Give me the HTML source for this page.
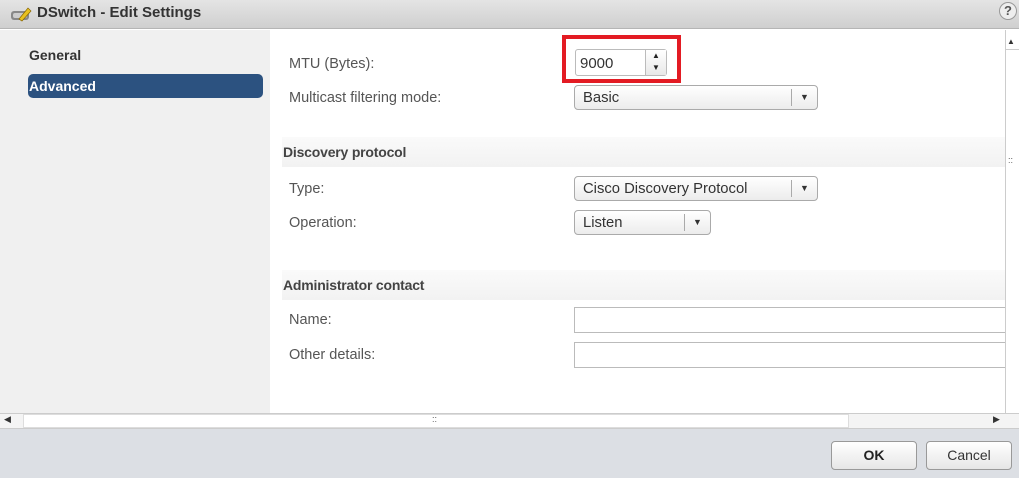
<!DOCTYPE html>
<html><head><style>
*{box-sizing:border-box;margin:0;padding:0}
body{width:1019px;height:478px;overflow:hidden;font-family:"Liberation Sans",sans-serif;background:#fff;position:relative}
.a{position:absolute}
.lbl{font-size:14.5px;color:#555}
.sel{position:absolute;height:25px;border:1px solid #aaa;border-radius:4px;background:linear-gradient(#fff,#ececec);font-size:14.8px;color:#333;padding:4px 8px}
.sel .dd{position:absolute;right:0;top:3px;bottom:3px;width:26px;border-left:1px solid #aaa;font-size:9px;text-align:center;line-height:17px;color:#333}
.band{position:absolute;left:282px;width:723px;height:30px;background:linear-gradient(#fafafa,#f2f2f2);font-size:14px;font-weight:bold;color:#444;padding:7px 1px;letter-spacing:-0.2px}
.inp{position:absolute;height:26px;border:1px solid #bbb;background:#fff}
</style></head><body>
<div class="a" style="left:0;top:0;width:1019px;height:29px;background:linear-gradient(#e4e4e4,#cfcfcf);border-bottom:1px solid #b5b5b5"></div>
<svg class="a" style="left:10px;top:5px" width="22" height="18"><rect x="1" y="6" width="18" height="9" rx="3" fill="#888"/><rect x="3" y="8" width="14" height="5" rx="2" fill="#ccc"/><path d="M9 14 L18 3 L21 6 L12 16 Z" fill="#e8c020" stroke="#886600" stroke-width=".7"/></svg>
<div class="a" style="left:37px;top:4px;font-size:15px;font-weight:bold;color:#333">DSwitch - Edit Settings</div>
<div class="a" style="left:999px;top:2px;width:18px;height:18px;border-radius:50%;border:1px solid #999;background:#eee;font-size:13px;font-weight:bold;text-align:center;line-height:16px;color:#555">?</div>
<div class="a" style="left:0;top:30px;width:270px;height:383px;background:#f0f0f0"></div>
<div class="a" style="left:29px;top:47px;font-size:14px;font-weight:bold;color:#333">General</div>
<div class="a" style="left:28px;top:74px;width:235px;height:24px;background:#2c5280;border-radius:5px;color:#fff;font-size:14px;font-weight:bold;padding:4px 1px">Advanced</div>
<div class="a lbl" style="left:289px;top:56px">MTU (Bytes):</div>
<div class="a" style="left:562px;top:35px;width:119px;height:48px;border:4px solid #e31b23"></div>
<div class="a" style="left:575px;top:49px;width:92px;height:27px;border:1px solid #bbb;border-radius:3px;background:#fff"></div>
<div class="a" style="left:580px;top:55px;font-size:15px;color:#333">9000</div>
<div class="a" style="left:645px;top:50px;width:21px;height:25px;border-left:1px solid #bbb;background:linear-gradient(#fff,#e8e8e8);font-size:8px;text-align:center;line-height:12px;color:#222">▲<br>▼</div>
<div class="a lbl" style="left:289px;top:90px">Multicast filtering mode:</div>
<div class="sel" style="left:574px;top:85px;width:244px">Basic<div class="dd">▼</div></div>
<div class="band" style="top:137px">Discovery protocol</div>
<div class="a lbl" style="left:289px;top:181px">Type:</div>
<div class="sel" style="left:574px;top:176px;width:244px">Cisco Discovery Protocol<div class="dd">▼</div></div>
<div class="a lbl" style="left:289px;top:215px">Operation:</div>
<div class="sel" style="left:574px;top:210px;width:137px">Listen<div class="dd">▼</div></div>
<div class="band" style="top:270px">Administrator contact</div>
<div class="a lbl" style="left:289px;top:312px">Name:</div>
<div class="inp" style="left:574px;top:307px;width:440px"></div>
<div class="a lbl" style="left:289px;top:347px">Other details:</div>
<div class="inp" style="left:574px;top:342px;width:440px"></div>
<div class="a" style="left:1005px;top:30px;width:14px;height:383px;background:#fff;border-left:1px solid #ccc"></div>
<div class="a" style="left:1007px;top:37px;font-size:8px;color:#333">▲</div>
<div class="a" style="left:1005px;top:49px;width:14px;height:1px;background:#ccc"></div>
<div class="a" style="left:1008px;top:155px;font-size:9px;color:#555">::</div>
<div class="a" style="left:0;top:413px;width:1019px;height:16px;background:#f4f4f4;border-top:1px solid #ccc;border-bottom:1px solid #ccc"></div>
<div class="a" style="left:23px;top:414px;width:826px;height:14px;background:#fff;border:1px solid #ddd"></div>
<div class="a" style="left:4px;top:414px;font-size:9px;color:#333">◀</div>
<div class="a" style="left:993px;top:414px;font-size:9px;color:#333">▶</div>
<div class="a" style="left:432px;top:414px;font-size:9px;color:#555">::</div>
<div class="a" style="left:0;top:429px;width:1019px;height:49px;background:#dcdfe4"></div>
<div class="a" style="left:831px;top:441px;width:86px;height:29px;border:1px solid #999;border-radius:4px;background:linear-gradient(#fff,#e6e6e6);text-align:center;font-size:14px;font-weight:bold;line-height:27px;color:#222">OK</div>
<div class="a" style="left:926px;top:441px;width:86px;height:29px;border:1px solid #999;border-radius:4px;background:linear-gradient(#fff,#e6e6e6);text-align:center;font-size:14px;line-height:27px;color:#333">Cancel</div>
</body></html>
